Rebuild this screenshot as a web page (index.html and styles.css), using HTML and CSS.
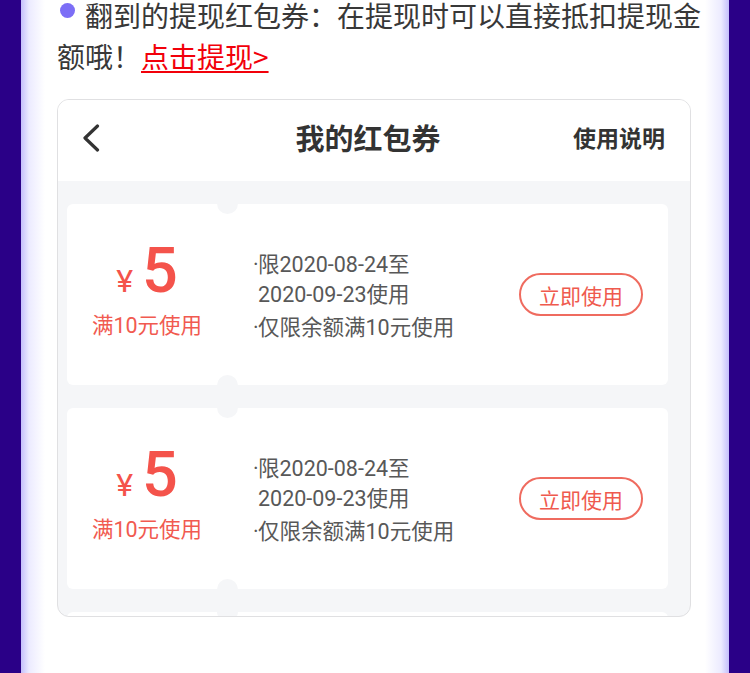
FILE: index.html
```html
<!DOCTYPE html>
<html lang="zh-CN">
<head>
<meta charset="utf-8">
<title>我的红包券</title>
<link rel="stylesheet" href="styles.css">
</head>
<body>
<div class="frame">
  <p class="intro"><span class="bullet"></span>翻到的提现红包券：在提现时可以直接抵扣提现金额哦！<a class="link" href="#">点击提现&gt;</a></p>

  <div class="phone">
    <div class="header">
      <svg class="back" width="18" height="28" viewBox="0 0 18 28"><path d="M15.5 2 L3 14 L15.5 26" fill="none" stroke="#333" stroke-width="3.2" stroke-linecap="round" stroke-linejoin="round"/></svg>
      <div class="title">我的红包券</div>
      <div class="help">使用说明</div>
    </div>
    <div class="list">
      <div class="coupon">
        <div class="amount">
          <div class="value"><span class="yen">¥</span><span class="num">5</span></div>
          <div class="cond">满10元使用</div>
        </div>
        <div class="info">
          <div class="item"><span class="dot">·</span><span>限2020-08-24至<br>2020-09-23使用</span></div>
          <div class="item gap"><span class="dot">·</span><span>仅限余额满10元使用</span></div>
        </div>
        <div class="btn">立即使用</div>
      </div>
      <div class="coupon">
        <div class="amount">
          <div class="value"><span class="yen">¥</span><span class="num">5</span></div>
          <div class="cond">满10元使用</div>
        </div>
        <div class="info">
          <div class="item"><span class="dot">·</span><span>限2020-08-24至<br>2020-09-23使用</span></div>
          <div class="item gap"><span class="dot">·</span><span>仅限余额满10元使用</span></div>
        </div>
        <div class="btn">立即使用</div>
      </div>
      <div class="coupon">
        <div class="amount">
          <div class="value"><span class="yen">¥</span><span class="num">5</span></div>
          <div class="cond">满10元使用</div>
        </div>
        <div class="info">
          <div class="item"><span class="dot">·</span><span>限2020-08-24至<br>2020-09-23使用</span></div>
          <div class="item gap"><span class="dot">·</span><span>仅限余额满10元使用</span></div>
        </div>
        <div class="btn">立即使用</div>
      </div>
    </div>
  </div>
</div>
</body>
</html>
```

FILE: styles.css
```css
html, body {
  margin: 0;
  padding: 0;
}
body {
  background: #2a0087;
  font-family: "Noto Sans CJK SC", "Noto Sans", sans-serif;
  overflow: hidden;
}
.frame {
  margin: 0 21px;
  min-height: 673px;
  background: linear-gradient(to right, #c4bffb 0, #ecebff 8px, #fff 24px, #fff calc(100% - 24px), #ecebff calc(100% - 8px), #c4bffb 100%);
  padding-top: 1px;
  box-sizing: border-box;
}
.intro {
  margin: -6px 0 0 0;
  padding: 0 16px 0 36px;
  font-size: 28px;
  line-height: 41px;
  color: #383838;
}
.bullet {
  display: inline-block;
  width: 15px;
  height: 15px;
  border-radius: 50%;
  background: #7c6ef6;
  margin: 0 10px 0 3px;
  vertical-align: 9px;
}
.link {
  color: #f2000a;
  text-decoration: underline;
  text-decoration-thickness: 2px;
  text-underline-offset: 3px;
}
.phone {
  margin: 22px 38px 0 36px;
  height: 518px;
  box-sizing: border-box;
  border: 1px solid #e0e0e2;
  border-radius: 12px;
  overflow: hidden;
  display: flex;
  flex-direction: column;
  background: #f5f6f8;
}
.header {
  flex: none;
  height: 81px;
  box-sizing: border-box;
  background: #fff;
  display: grid;
  grid-template-columns: 1fr auto 1fr;
  align-items: center;
  padding: 0 25px 8px 24px;
  color: #333;
}
.back {
  display: block;
  margin-top: 3px;
}
.title {
  font-size: 29px;
  font-weight: 700;
  margin-right: 11px;
}
.help {
  justify-self: end;
  font-size: 23px;
  font-weight: 700;
}
.list {
  flex: 1;
  padding: 23px 22px 0 9px;
  display: flex;
  flex-direction: column;
  gap: 23px;
}
.coupon {
  flex: none;
  position: relative;
  height: 181px;
  background: #fff;
  border-radius: 6px;
  display: flex;
  align-items: center;
}
.coupon::before,
.coupon::after {
  content: "";
  position: absolute;
  left: 150px;
  width: 21px;
  height: 21px;
  border-radius: 50%;
  background: #f5f6f8;
}
.coupon::before { top: -11px; }
.coupon::after { bottom: -11px; }
.amount {
  width: 160px;
  flex: none;
  text-align: center;
  color: #f4534b;
}
.value {
  font-family: Roboto, "Noto Sans CJK SC", sans-serif;
  line-height: 58px;
  height: 58px;
  margin-top: -6px;
}
.yen {
  font-size: 32px;
  margin-right: 9px;
}
.num {
  font-size: 63px;
  font-weight: 500;
}
.cond {
  font-family: Roboto, "Noto Sans CJK SC", sans-serif;
  font-size: 21.5px;
  line-height: 30px;
  margin-top: 11px;
  color: #f15a50;
}
.info {
  flex: 1;
  padding-left: 26px;
  font-family: Roboto, "Noto Sans CJK SC", sans-serif;
  font-size: 21.5px;
  line-height: 30px;
  color: #585858;
  margin-top: 4px;
}
.item {
  display: flex;
}
.item.gap {
  margin-top: 3px;
}
.dot {
  width: 5px;
  flex: none;
}
.btn {
  flex: none;
  width: 124px;
  height: 43px;
  box-sizing: border-box;
  margin-right: 25px;
  border: 2px solid #ef6b5f;
  border-radius: 22px;
  color: #ef5a4e;
  font-size: 21px;
  display: flex;
  align-items: center;
  justify-content: center;
}
```
